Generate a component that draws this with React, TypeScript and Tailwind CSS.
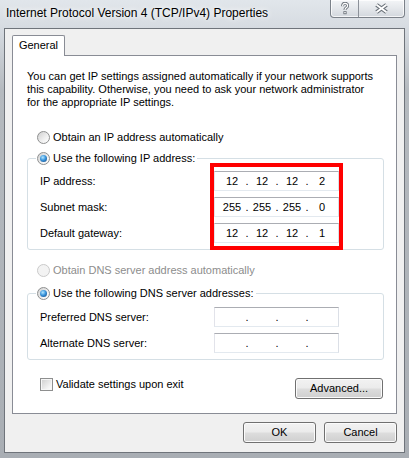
import { Fragment, type ReactNode } from 'react';

function Radio({ checked = false, disabled = false }: { checked?: boolean; disabled?: boolean }) {
    return (
        <span
            className={
                disabled
                    ? "flex h-[13px] w-[13px] shrink-0 items-center justify-center rounded-full border border-[#cacaca] bg-[#f3f3f3]"
                    : "flex h-[13px] w-[13px] shrink-0 items-center justify-center rounded-full border border-[#8e8f8f] bg-[linear-gradient(135deg,#cfcfcf_0%,#f1f1f1_60%,#ffffff_100%)]"
            }
        >
            {checked && (
                <span className="h-[7px] w-[7px] rounded-full bg-[radial-gradient(circle_at_40%_35%,#b5e7ff_0%,#3a95dc_45%,#0d3e79_100%)]" />
            )}
        </span>
    );
}

function RadioRow({ label, checked, disabled }: { label: string; checked?: boolean; disabled?: boolean }) {
    return (
        <div className={disabled ? "flex h-[16px] items-center gap-[3px] text-[#8d8d8d]" : "flex h-[16px] items-center gap-[3px]"}>
            <Radio checked={checked} disabled={disabled} />
            <span className="whitespace-nowrap">{label}</span>
        </div>
    );
}

function IpField({ parts }: { parts: string[] }) {
    return (
        <div className="flex h-[20px] w-[125px] items-center border border-[#abadb3] border-b-[#e3e9ef] border-l-[#e2e3ea] border-r-[#dbdfe6] bg-white pl-[5px]">
            {parts.map((p, i) => (
                <Fragment key={i}>
                    <span className="w-[24px] text-center">{p}</span>
                    {i < 3 && <span className="w-[6px] text-center">.</span>}
                </Fragment>
            ))}
        </div>
    );
}

function Button({ children, className }: { children: ReactNode; className: string }) {
    return (
        <div
            className={
                "flex h-[21px] items-center justify-center rounded-[3px] border border-[#707070] bg-[linear-gradient(180deg,#f2f2f2_0%,#ebebeb_48%,#dddddd_52%,#cfcfcf_100%)] shadow-[inset_0_0_0_1px_#fbfbfb] " +
                className
            }
        >
            {children}
        </div>
    );
}

function CaptionButtons() {
    return (
        <div className="mr-[4px] flex h-[18px] overflow-hidden rounded-b-[4px] border border-t-0 border-[#7b8189] bg-[linear-gradient(180deg,#f3f5f7_0%,#e4e7eb_50%,#d2d7dd_100%)] shadow-[inset_0_0_0_1px_rgba(255,255,255,0.75)]">
            <div className="flex w-[27px] items-center justify-center">
                <svg width="10" height="13" viewBox="0 0 10 13">
                    <path d="M2.6 4.2 C2.6 2.2 3.8 1.3 5 1.3 C6.6 1.3 7.6 2.3 7.6 3.7 C7.6 5.1 6.6 5.6 5.7 6.2 C5.1 6.6 5 7.1 5 8.1" fill="none" stroke="#6c737b" strokeWidth="3" />
                    <path d="M2.6 4.2 C2.6 2.2 3.8 1.3 5 1.3 C6.6 1.3 7.6 2.3 7.6 3.7 C7.6 5.1 6.6 5.6 5.7 6.2 C5.1 6.6 5 7.1 5 8.1" fill="none" stroke="#ffffff" strokeWidth="1.2" />
                    <rect x="3.4" y="9.2" width="3.2" height="3" fill="#6c737b" />
                    <rect x="4.3" y="10" width="1.4" height="1.3" fill="#ffffff" />
                </svg>
            </div>
            <div className="flex w-[46px] items-center justify-center border-l border-[#8c9199]">
                <svg width="15" height="11" viewBox="0 0 15 11">
                    <path d="M2.5 1.8 L12.5 9.2 M12.5 1.8 L2.5 9.2" stroke="#6c737b" strokeWidth="4" />
                    <path d="M2.5 1.8 L12.5 9.2 M12.5 1.8 L2.5 9.2" stroke="#ffffff" strokeWidth="1.8" />
                </svg>
            </div>
        </div>
    );
}

export default function App() {
    return (
        <div className="flex h-[458px] w-[409px] flex-col overflow-hidden bg-[linear-gradient(180deg,#e1e6eb_0px,#d6dbe1_28px,#b5babf_90px,#a9aeb4_100%)] font-['Liberation_Sans',Arial,sans-serif] text-[11px] leading-[13px] text-black">
            {/* Title bar */}
            <div className="flex h-[28px] shrink-0 items-start justify-between">
                <div className="whitespace-nowrap pl-[6px] pt-[6px] text-[12px] leading-[14px] [text-shadow:0_0_5px_#ffffff,0_0_9px_#ffffff]">
                    Internet Protocol Version 4 (TCP/IPv4) Properties
                </div>
                <CaptionButtons />
            </div>

            {/* Client area */}
            <div className="mx-[4px] flex h-[425px] shrink-0 flex-col border border-[#6f747b] bg-[#f0f0f0] pt-[6px]">
                <div className="ml-[7px] flex">
                    <div className="relative z-10 flex h-[21px] w-[53px] items-center justify-center rounded-t-[2px] border border-b-0 border-[#898c95] bg-white pb-[1px]">
                        General
                    </div>
                </div>

                <div className="mx-[7px] -mt-px flex h-[359px] flex-col border border-[#898c95] bg-white pl-[14px] pr-[12px]">
                    <p className="mt-[14px] whitespace-nowrap">
                        You can get IP settings assigned automatically if your network supports
                        <br />
                        this capability. Otherwise, you need to ask your network administrator
                        <br />
                        for the appropriate IP settings.
                    </p>

                    <div className="mt-[20px] pl-[10px]">
                        <RadioRow label="Obtain an IP address automatically" />
                    </div>

                    <fieldset className="mt-[5px] rounded-[3px] border border-[#d5dfe5] px-[8px] pb-[6px]">
                        <legend className="pl-[1px] pr-[2px]">
                            <RadioRow label="Use the following IP address:" checked />
                        </legend>
                        <div className="mt-[5px] flex">
                            <div className="flex w-[178px] flex-col gap-[6px] pl-[4px]">
                                <div className="flex h-[20px] items-center">IP address:</div>
                                <div className="flex h-[20px] items-center">Subnet mask:</div>
                                <div className="flex h-[20px] items-center">Default gateway:</div>
                            </div>
                            <div className="relative flex flex-col gap-[6px]">
                                <IpField parts={['12', '12', '12', '2']} />
                                <IpField parts={['255', '255', '255', '0']} />
                                <IpField parts={['12', '12', '12', '1']} />
                                <div className="absolute -bottom-[7px] -left-[4px] -right-[4px] -top-[8px] border-[4px] border-[#ff0000]" />
                            </div>
                        </div>
                    </fieldset>

                    <div className="mt-[12px] pl-[10px]">
                        <RadioRow label="Obtain DNS server address automatically" disabled />
                    </div>

                    <fieldset className="mt-[7px] rounded-[3px] border border-[#d5dfe5] px-[8px] pb-[6px]">
                        <legend className="pl-[1px] pr-[2px]">
                            <RadioRow label="Use the following DNS server addresses:" checked />
                        </legend>
                        <div className="mt-[6px] flex">
                            <div className="flex w-[178px] flex-col gap-[6px] pl-[4px]">
                                <div className="flex h-[20px] items-center">Preferred DNS server:</div>
                                <div className="flex h-[20px] items-center">Alternate DNS server:</div>
                            </div>
                            <div className="flex flex-col gap-[6px]">
                                <IpField parts={['', '', '', '']} />
                                <IpField parts={['', '', '', '']} />
                            </div>
                        </div>
                    </fieldset>

                    <div className="mt-[18px] flex items-start justify-between pr-[1px]">
                        <div className="ml-[13px] flex h-[13px] items-center gap-[3px]">
                            <span className="h-[13px] w-[13px] border border-[#8e8f8f] bg-[linear-gradient(135deg,#cdcdcd_0%,#f2f2f2_70%,#ffffff_100%)] shadow-[inset_0_0_0_1px_#f6f6f6]" />
                            <span className="whitespace-nowrap">Validate settings upon exit</span>
                        </div>
                        <Button className="w-[88px]">Advanced...</Button>
                    </div>
                </div>

                <div className="mt-[8px] flex justify-end gap-[8px] pr-[7px]">
                    <Button className="w-[73px]">OK</Button>
                    <Button className="w-[73px]">Cancel</Button>
                </div>
            </div>
        </div>
    );
}
